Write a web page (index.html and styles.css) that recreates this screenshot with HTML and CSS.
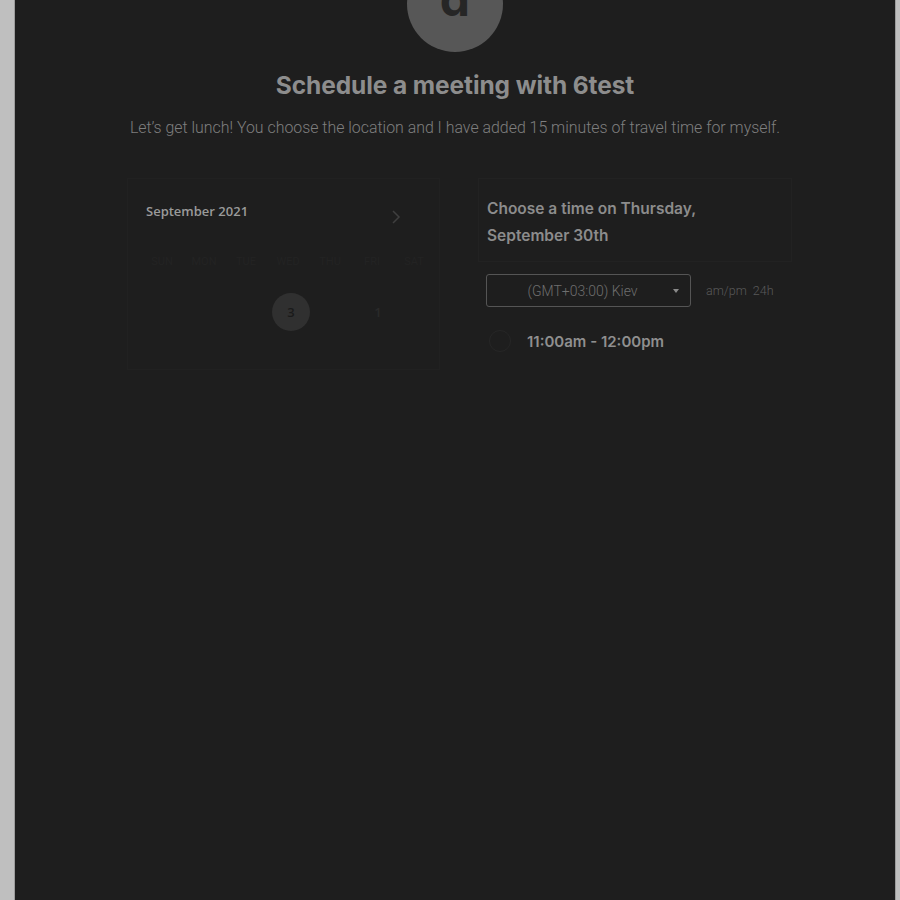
FILE: index.html
```html
<!DOCTYPE html>
<html>
<head>
<meta charset="utf-8">
<link rel="stylesheet" href="styles.css">
</head>
<body>
<div class="panel">
  <div class="avatar"><span>d</span></div>
  <h1 class="title">Schedule a meeting with 6test</h1>
  <p class="subtitle">Let’s get lunch! You choose the location and I have added 15 minutes of travel time for myself.</p>
  <div class="columns">
    <div class="calendar">
      <div class="cal-head">
        <span class="month">September 2021</span>
        <svg class="chev" width="10" height="16" viewBox="0 0 10 16"><path d="M2 2 L8 8 L2 14" fill="none" stroke="#3f3f3f" stroke-width="1.5"/></svg>
      </div>
      <div class="weekdays">
        <span>SUN</span><span>MON</span><span>TUE</span><span>WED</span><span>THU</span><span>FRI</span><span>SAT</span>
      </div>
      <div class="days">
        <span></span><span></span><span></span>
        <span class="day sel">3</span>
        <span></span>
        <span class="day faint">1</span>
        <span></span>
      </div>
    </div>
    <div class="times">
      <div class="times-head">Choose a time on Thursday,<br>September 30th</div>
      <div class="tz-row">
        <div class="select"><span>(GMT+03:00) Kiev</span><i class="caret"></i></div>
        <div class="fmt">am/pm&nbsp;&nbsp;24h</div>
      </div>
      <div class="slot"><span class="radio"></span><span class="slot-text">11:00am - 12:00pm</span></div>
    </div>
  </div>
</div>
</body>
</html>
```
FILE: styles.css
```css
html, body { margin: 0; padding: 0; }
body {
  background: #bfbfbf;
  height: 900px;
  overflow: hidden;
  font-family: Roboto, "Liberation Sans", sans-serif;
}
.panel {
  margin: 0 4px 0 14px;
  height: 900px;
  background: #1e1e1e;
  border-left: 1px solid #9c9c9c;
  border-right: 1px solid #9c9c9c;
  display: flex;
  flex-direction: column;
  align-items: center;
  overflow: hidden;
}
.avatar {
  width: 96px;
  height: 96px;
  border-radius: 50%;
  background: #575757;
  margin-top: -44px;
  display: flex;
  justify-content: center;
  align-items: center;
}
.avatar span {
  font-family: Inter, sans-serif;
  font-weight: 700;
  font-size: 48px;
  color: #262626;
  line-height: 1;
  margin-top: -10px;
}
.title {
  margin: 18px 0 0 0;
  font-family: Inter, sans-serif;
  font-weight: 700;
  font-size: 24.5px;
  line-height: 30px;
  color: #8d8d8d;
  letter-spacing: -0.1px;
}
.subtitle {
  margin: 18px 0 0 0;
  font-family: Roboto, sans-serif;
  font-weight: 300;
  font-size: 15.9px;
  line-height: 20px;
  color: #7e7e7e;
}
.columns {
  display: flex;
  gap: 38px;
  margin-top: 40px;
  margin-left: 9px;
}
.calendar {
  width: 313px;
  height: 192px;
  border: 1px solid #212121;
  box-sizing: border-box;
}
.cal-head {
  display: flex;
  justify-content: space-between;
  align-items: center;
  padding: 18px 38px 0 18px;
}
.month {
  font-family: "Open Sans", sans-serif;
  font-weight: 600;
  font-size: 13px;
  color: #9a9a9a;
}
.chev { margin-top: 12px; }
.weekdays {
  display: grid;
  grid-template-columns: repeat(7, 42px);
  margin: 30px 0 0 13px;
  font-size: 11px;
  color: #232323;
  text-align: center;
}
.days {
  display: grid;
  grid-template-columns: repeat(7, 42px);
  margin: 25px 0 0 13px;
  align-items: center;
  justify-items: center;
}
.day {
  width: 38px;
  height: 38px;
  border-radius: 50%;
  display: flex;
  align-items: center;
  justify-content: center;
  font-family: "Open Sans", sans-serif;
  font-size: 13px;
  font-weight: 600;
}
.day.sel {
  background: #303030;
  color: #1a1a1a;
  margin-left: 6px;
}
.day.faint {
  color: #2a2a2a;
  margin-left: 12px;
}
.times {
  width: 314px;
}
.times-head {
  border: 1px solid #222;
  height: 84px;
  box-sizing: border-box;
  padding: 16px 8px 0 8px;
  font-family: Inter, sans-serif;
  font-weight: 600;
  font-size: 15.5px;
  line-height: 27px;
  color: #8c8c8c;
}
.tz-row {
  display: flex;
  align-items: center;
  gap: 15px;
  margin: 12px 0 0 8px;
}
.select {
  width: 205px;
  height: 33px;
  box-sizing: border-box;
  border: 1px solid #555;
  border-radius: 3px;
  display: flex;
  align-items: center;
  justify-content: center;
  position: relative;
  font-weight: 300;
  font-size: 14px;
  color: #6e6e6e;
}
.select span { margin-left: -12px; }
.caret {
  position: absolute;
  right: 11px;
  top: 14px;
  width: 0;
  height: 0;
  border-left: 3.5px solid transparent;
  border-right: 3.5px solid transparent;
  border-top: 4px solid #8a8a8a;
}
.fmt {
  font-weight: 300;
  font-size: 12.5px;
  color: #595959;
}
.slot {
  display: flex;
  align-items: center;
  margin: 23px 0 0 8px;
}
.radio {
  width: 22px;
  height: 22px;
  border-radius: 50%;
  border: 1px solid #262626;
  box-sizing: border-box;
  margin-left: 3px;
}
.slot-text {
  margin-left: 16px;
  font-family: Inter, sans-serif;
  font-weight: 600;
  font-size: 15px;
  color: #8f8f8f;
}
```
